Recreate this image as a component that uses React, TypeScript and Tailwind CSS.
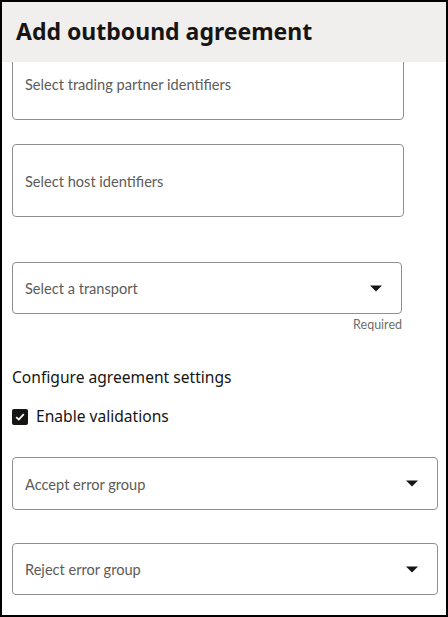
import React from "react";

const Caret = () => (
  <svg width="12" height="7" viewBox="0 0 12 7" className="shrink-0">
    <path d="M0 0.5 L12 0.5 L6 6.5 Z" fill="#161513" />
  </svg>
);

function TextField({ label }: { label: string }) {
  return (
    <div className="h-[73px] w-[392px] rounded-[4px] border border-[#8f8f8f] flex items-center px-[12px]">
      <span className="text-[14.6px] text-[#5c5b59] font-['Lato',sans-serif] leading-none mt-[4px]">{label}</span>
    </div>
  );
}

function SelectField({ label, width, h }: { label: string; width: string; h: string }) {
  return (
    <div className={`${width} ${h} rounded-[4px] border border-[#8f8f8f] flex items-center justify-between pl-[12px] pr-[19px]`}>
      <span className="text-[14.6px] text-[#5c5b59] font-['Lato',sans-serif] leading-none mt-[3px]">{label}</span>
      <Caret />
    </div>
  );
}

export default function App() {
  return (
    <div className="w-[448px] h-[617px] border-2 border-black bg-white flex flex-col overflow-hidden">
      <div className="h-[60px] shrink-0 bg-[#f1efed] flex items-center px-[14px]">
        <h1 className="text-[23px] font-bold text-[#161513] font-['Noto_Sans',sans-serif] leading-none -mt-[2px]">
          Add outbound agreement
        </h1>
      </div>
      <div className="flex-1 overflow-hidden">
        <div className="-mt-[15px] pl-[10px] flex flex-col">
          <TextField label="Select trading partner identifiers" />
          <div className="mt-[24px]">
            <TextField label="Select host identifiers" />
          </div>
          <div className="mt-[45px] w-[390px]">
            <SelectField label="Select a transport" width="w-[390px]" h="h-[52px]" />
            <div className="text-right text-[12.5px] text-[#6f6e6b] font-['Lato',sans-serif] leading-none mt-[5px]">
              Required
            </div>
          </div>
          <div className="mt-[38px] text-[15.6px] text-[#161513] font-['Noto_Sans',sans-serif] leading-none">
            Configure agreement settings
          </div>
          <label className="mt-[24px] flex items-center gap-[8px]">
            <span className="w-[16px] h-[16px] rounded-[2px] bg-[#161513] flex items-center justify-center">
              <svg width="10" height="8" viewBox="0 0 10 8">
                <path d="M1.2 4.2 L3.8 6.6 L8.8 1.2" stroke="white" strokeWidth="1.8" fill="none" />
              </svg>
            </span>
            <span className="text-[15.6px] text-[#161513] font-['Noto_Sans',sans-serif] leading-none">Enable validations</span>
          </label>
          <div className="mt-[32px]">
            <SelectField label="Accept error group" width="w-[426px]" h="h-[53px]" />
          </div>
          <div className="mt-[33px]">
            <SelectField label="Reject error group" width="w-[426px]" h="h-[52px]" />
          </div>
        </div>
      </div>
    </div>
  );
}
